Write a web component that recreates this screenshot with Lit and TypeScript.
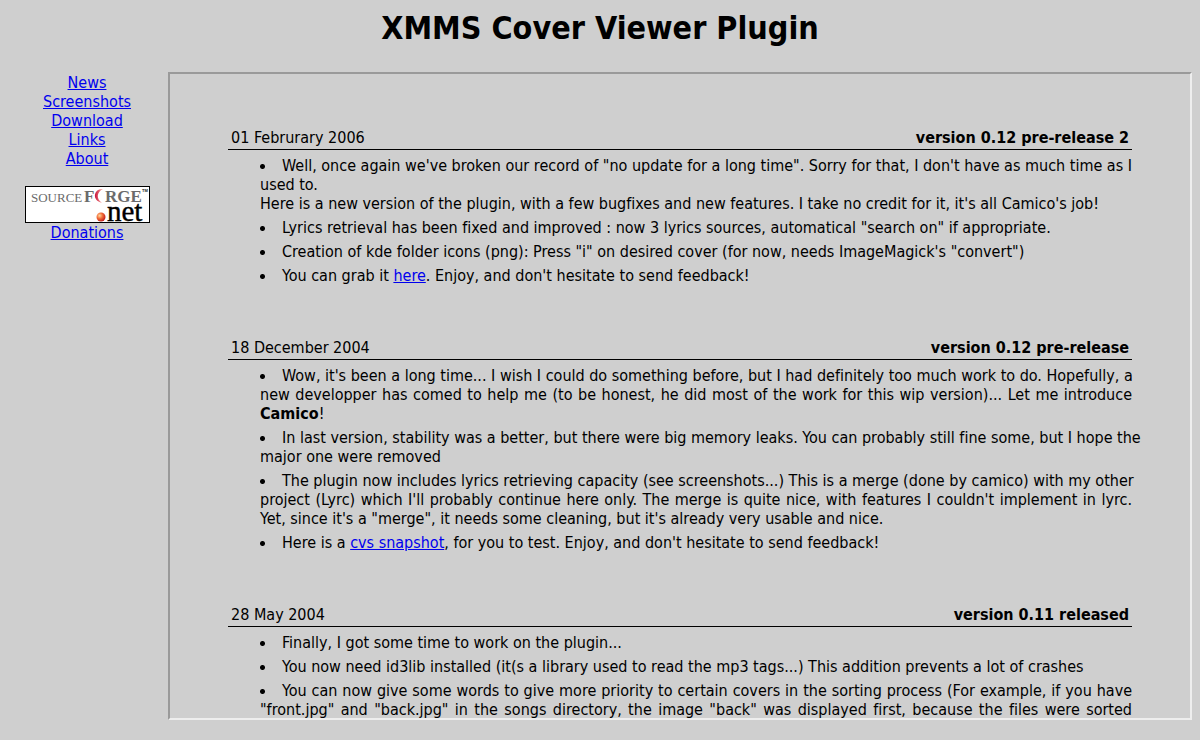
import { LitElement, html, css, svg, TemplateResult } from "lit";
import { customElement, property } from "lit/decorators.js";

interface NewsEntry {
  date: string;
  title: string;
  items: TemplateResult[];
}

const MENU = ["News", "Screenshots", "Download", "Links", "About"];

const NEWS: NewsEntry[] = [
  {
    date: "01 Februrary 2006",
    title: "version 0.12 pre-release 2",
    items: [
      html`Well, once again we've broken our record of "no update for a long time". Sorry for that, I don't have as much time as I used to.<br />Here is a new version of the plugin, with a few bugfixes and new features. I take no credit for it, it's all Camico's job!`,
      html`Lyrics retrieval has been fixed and improved : now 3 lyrics sources, automatical "search on" if appropriate.`,
      html`Creation of kde folder icons (png): Press "i" on desired cover (for now, needs ImageMagick's "convert")`,
      html`You can grab it <a href="#download">here</a>. Enjoy, and don't hesitate to send feedback!`,
    ],
  },
  {
    date: "18 December 2004",
    title: "version 0.12 pre-release",
    items: [
      html`<span class="line">Wow, it's been a long time... I wish I could do something before, but I had definitely too much work to do. Hopefully, a</span> new developper has comed to help me (to be honest, he did most of the work for this wip version)... Let me introduce <b>Camico</b>!`,
      html`<span class="line">In last version, stability was a better, but there were big memory leaks. You can probably still fine some, but I hope the</span> major one were removed`,
      html`<span class="line">The plugin now includes lyrics retrieving capacity (see screenshots...) This is a merge (done by camico) with my other</span> project (Lyrc) which I'll probably continue here only. The merge is quite nice, with features I couldn't implement in lyrc. Yet, since it's a "merge", it needs some cleaning, but it's already very usable and nice.`,
      html`Here is a <a href="#cvs">cvs snapshot</a>, for you to test. Enjoy, and don't hesitate to send feedback!`,
    ],
  },
  {
    date: "28 May 2004",
    title: "version 0.11 released",
    items: [
      html`Finally, I got some time to work on the plugin...`,
      html`You now need id3lib installed (it(s a library used to read the mp3 tags...) This addition prevents a lot of crashes`,
      html`You can now give some words to give more priority to certain covers in the sorting process (For example, if you have "front.jpg" and "back.jpg" in the songs directory, the image "back" was displayed first, because the files were sorted alphabetically)`,
    ],
  },
];

const linkStyles = css`
  a {
    color: #0000ee;
    text-decoration: underline;
  }
`;

@customElement("sourceforge-logo")
export class SourceforgeLogo extends LitElement {
  static styles = css`
    :host {
      display: block;
      width: 125px;
      height: 37px;
    }
    .logo {
      display: block;
    }
    .word {
      font-family: "Liberation Serif", serif;
      fill: #6b6b6b;
    }
    .source {
      font-size: 13px;
    }
    .forge {
      font-size: 17px;
      font-weight: bold;
    }
    .net {
      font-family: "Liberation Serif", serif;
      font-size: 29px;
      fill: #000;
      stroke: #000;
      stroke-width: 0.4px;
    }
    .mark {
      font: bold 4px "Liberation Sans", sans-serif;
      fill: #222;
    }
  `;
  render() {
    return html`<svg class="logo" width="125" height="37" viewBox="0 0 125 37" role="img" aria-label="SourceForge.net Logo">
      ${svg`
        <defs>
          <radialGradient id="ball" cx="0.35" cy="0.35" r="0.7">
            <stop offset="0" stop-color="#ffd9a0" />
            <stop offset="0.45" stop-color="#f2703a" />
            <stop offset="1" stop-color="#c01818" />
          </radialGradient>
          <linearGradient id="moon" x1="0" x2="1" y1="0" y2="0">
            <stop offset="0" stop-color="#c8143c" />
            <stop offset="1" stop-color="#ffb0a0" />
          </linearGradient>
        </defs>
        <rect x="0.5" y="0.5" width="124" height="36" fill="#fff" stroke="#000" />
        <text class="word source" x="6" y="16">SOURCE</text>
        <text class="word forge" x="59" y="16">F</text>
        <path d="M78 3C68.500 2.500 66.500 14.500 77 16.800C71 13 71.500 6 78 3Z" fill="url(#moon)" />
        <text class="word forge" x="80" y="16">RGE</text>
        <text class="mark" x="117" y="6">TM</text>
        <circle cx="76" cy="31" r="4.500" fill="url(#ball)" />
        <text class="net" x="82" y="35">net</text>
      `}
    </svg>`;
  }
}

@customElement("news-entry")
export class NewsEntryElement extends LitElement {
  @property({ attribute: false }) entry!: NewsEntry;

  static styles = [
    linkStyles,
    css`
      :host {
        display: block;
      }
      .heading {
        display: flex;
        justify-content: space-between;
        padding: 2px 3px;
        border-bottom: 1px solid #000;
      }
      .date,
      .title {
        margin: 0;
        font-size: 16px;
      }
      .items {
        display: grid;
        grid-template-columns: minmax(0, 1fr);
        gap: 5px;
        margin: 0;
        padding: 6px 0 0 32px;
        list-style: none;
        text-align: justify;
      }
      .item {
        background: radial-gradient(circle, #000 2px, transparent 3px) 0 8px / 5px 5px no-repeat;
        text-indent: 22px;
      }
      .line {
        white-space: nowrap;
      }
    `,
  ];
  render() {
    return html`
      <header class="heading">
        <span class="date">${this.entry.date}</span>
        <h2 class="title">${this.entry.title}</h2>
      </header>
      <ul class="items">
        ${this.entry.items.map((item) => html`<li class="item">${item}</li>`)}
      </ul>
    `;
  }
}

@customElement("app-root")
export class AppRoot extends LitElement {
  static styles = [
    linkStyles,
    css`
      :host {
        display: flex;
        flex-direction: column;
        box-sizing: border-box;
        height: 100vh;
        padding: 8px 8px 20px;
        background: #cfcfcf;
        color: #000;
        font: 16px/19px "DejaVu Sans Condensed", sans-serif;
        font-variant-ligatures: none;
      }
      .banner {
        margin: 0 0 24px;
        font-size: 32px;
        line-height: 40px;
        text-align: center;
      }
      .page {
        flex: 1;
        min-height: 0;
        display: grid;
        grid-template-columns: 158px minmax(0, 1fr);
        gap: 2px;
      }
      .menu {
        display: flex;
        flex-direction: column;
        align-items: center;
        padding-top: 1px;
      }
      .logo-link {
        margin-top: 18px;
      }
      .content {
        box-sizing: border-box;
        overflow: hidden;
        padding: 52px 58px 0;
        border: 2px solid;
        border-color: #9a9a9a #eeeeee #eeeeee #9a9a9a;
      }
      .entry + .entry {
        margin-top: 51px;
      }
    `,
  ];
  render() {
    return html`
      <h1 class="banner">XMMS Cover Viewer Plugin</h1>
      <div class="page">
        <nav class="menu">
          ${MENU.map((name) => html`<a href="#${name.toLowerCase()}">${name}</a>`)}
          <a class="logo-link" href="#sourceforge"><sourceforge-logo></sourceforge-logo></a>
          <a href="#donations">Donations</a>
        </nav>
        <main class="content">
          ${NEWS.map((entry) => html`<news-entry class="entry" .entry=${entry}></news-entry>`)}
        </main>
      </div>
    `;
  }
}
